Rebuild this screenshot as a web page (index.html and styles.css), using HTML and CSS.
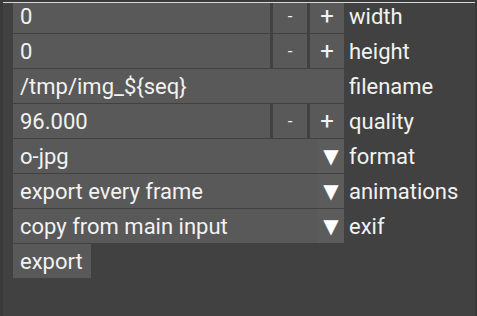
FILE: index.html
```html
<!DOCTYPE html>
<html lang="en">
<head>
<meta charset="UTF-8" />
<title>Export</title>
<link rel="stylesheet" href="styles.css">
</head>
<body>
<div class="panel">
  <div class="rows">
    <div class="row">
      <div class="field">0</div>
      <div class="btn minus">-</div>
      <div class="btn plus">+</div>
      <div class="label">width</div>
    </div>
    <div class="row">
      <div class="field">0</div>
      <div class="btn minus">-</div>
      <div class="btn plus">+</div>
      <div class="label">height</div>
    </div>
    <div class="row">
      <div class="field wide">/tmp/img_${seq}</div>
      <div class="label">filename</div>
    </div>
    <div class="row">
      <div class="field">96.000</div>
      <div class="btn minus">-</div>
      <div class="btn plus">+</div>
      <div class="label">quality</div>
    </div>
    <div class="row">
      <div class="field select">o-jpg</div>
      <div class="drop">&#9660;</div>
      <div class="label">format</div>
    </div>
    <div class="row">
      <div class="field select">export every frame</div>
      <div class="drop">&#9660;</div>
      <div class="label">animations</div>
    </div>
    <div class="row">
      <div class="field select">copy from main input</div>
      <div class="drop">&#9660;</div>
      <div class="label">exif</div>
    </div>
    <div class="row">
      <div class="action">export</div>
    </div>
  </div>
</div>
</body>
</html>
```

FILE: styles.css
```css
* {
  box-sizing: border-box;
}
html, body {
  margin: 0;
  padding: 0;
  height: 100%;
  background: #3a3a3a;
  overflow: hidden;
}
body {
  font-family: Roboto, "Liberation Sans", sans-serif;
  font-size: 22px;
  color: #f2f2f2;
  padding-left: 3px;
  padding-right: 2px;
}
.panel {
  height: 100%;
  background: #414141;
  border-top: 1px solid #d8d8d8;
  margin-top: 2px;
  padding-left: 10px;
  overflow: hidden;
}
.rows {
  margin-top: -4px;
  display: flex;
  flex-direction: column;
  gap: 1px;
}
.row {
  display: flex;
  height: 34px;
  align-items: stretch;
}
.field {
  width: 257px;
  background: #595959;
  padding-left: 7px;
  display: flex;
  align-items: center;
  white-space: nowrap;
}
.field.wide {
  width: 331px;
}
.field.select {
  width: 305px;
}
.btn {
  width: 34px;
  background: #595959;
  display: flex;
  align-items: center;
  justify-content: center;
}
.minus {
  margin-left: 3px;
  font-size: 17px;
}
.plus {
  margin-left: 3px;
  font-size: 24px;
}
.drop {
  width: 26px;
  background: #5c5c5c;
  display: flex;
  align-items: center;
  justify-content: center;
  font-family: "DejaVu Sans", sans-serif;
  font-size: 20px;
  color: #fff;
}
.label {
  padding-left: 5px;
  display: flex;
  align-items: center;
}
.action {
  width: 78px;
  background: #595959;
  padding-left: 7px;
  display: flex;
  align-items: center;
}
```
